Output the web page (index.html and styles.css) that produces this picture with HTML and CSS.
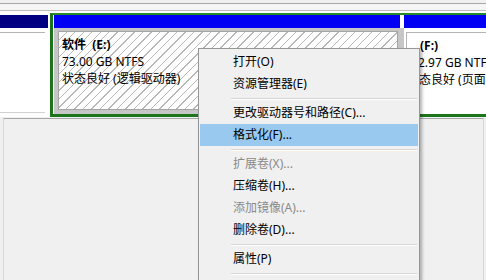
FILE: index.html
```html
<!DOCTYPE html>
<html lang="zh-CN">
<head>
<meta charset="utf-8">
<title>磁盘管理</title>
<link rel="stylesheet" href="styles.css">
</head>
<body>
<div class="screen">
  <div class="topbar"></div>
  <div class="disk">
    <div class="col-left">
      <div class="hdr navy"></div>
      <div class="lbody"></div>
    </div>
    <div class="ext">
      <div class="vol vol-e">
        <div class="hdr blue hdr-e"></div>
        <div class="ebody">
          <div class="hatch">
            <div class="b">软件&nbsp;&nbsp;(E:)</div>
            <div>73.00 GB NTFS</div>
            <div>状态良好 (逻辑驱动器)</div>
          </div>
        </div>
      </div>
      <div class="vol vol-f">
        <div class="hdr blue"></div>
        <div class="fbody">
          <div class="b f1">(F:)</div>
          <div class="f2">2.97 GB NTFS</div>
          <div class="f3">状态良好 (页面</div>
        </div>
      </div>
    </div>
  </div>
  <div class="lower"><div class="lower-inner"></div></div>

  <div class="menu">
    <div class="item">打开(O)</div>
    <div class="item">资源管理器(E)</div>
    <div class="sep"></div>
    <div class="item">更改驱动器号和路径(C)...</div>
    <div class="item sel">格式化(F)...</div>
    <div class="sep"></div>
    <div class="item dis">扩展卷(X)...</div>
    <div class="item">压缩卷(H)...</div>
    <div class="item dis">添加镜像(A)...</div>
    <div class="item">删除卷(D)...</div>
    <div class="sep"></div>
    <div class="item">属性(P)</div>
    <div class="sep"></div>
  </div>
</div>
</body>
</html>
```
FILE: styles.css
```css
* { box-sizing: border-box; margin: 0; padding: 0; }
html, body { width: 486px; height: 280px; overflow: hidden; background: #f0f0f0; }
body {
  font-family: "Noto Sans", "Noto Sans CJK SC", sans-serif;
  font-size: 12px;
  color: #000;
}
.screen {
  position: relative;
  width: 486px;
  height: 280px;
  display: flex;
  flex-direction: column;
  overflow: hidden;
}
.topbar {
  height: 13px;
  flex: none;
  background: linear-gradient(to bottom,
    #f0f0f0 0 3px, #a8a8a8 3px 4px, #f5f5f5 4px 10px,
    #bcbcbc 10px 11px, #ffffff 11px 13px);
}
.disk {
  height: 104px;
  flex: none;
  display: flex;
  background: #fff;
}
.col-left {
  width: 48px;
  flex: none;
  padding-top: 2px;
  display: flex;
  flex-direction: column;
}
.hdr { height: 13px; flex: none; }
.navy { background: #000080; }
.blue { background: #0000f4; }
.lbody {
  margin-top: 4px;
  height: 81px;
  margin-right: 3px;
  border-top: 1px solid #b4b4b4;
  border-bottom: 1px solid #d0d0d0;
}
.ext {
  flex: 1;
  min-width: 0;
  margin-left: 2px;
  border-top: 2px solid #2a8a2a;
  border-bottom: 3px solid #1c751c;
  border-left: 3px solid #1c751c;
  padding-left: 1px;
  display: flex;
  background: #fff;
}
.vol { display: flex; flex-direction: column; }
.vol-e { width: 350px; flex: none; }
.hdr-e { margin-right: 4px; }
.ebody {
  flex: 1;
  background: #c6c6c6;
  padding: 3px 6px 4px 4px;
}
.hatch {
  height: 100%;
  border: 1px solid #a4a4a4;
  background: repeating-linear-gradient(135deg, #ffffff 0 5px, #b8b8b8 5px 6px);
  padding: 4px 0 0 3px;
  line-height: 17px;
  white-space: nowrap;
}
.b { font-weight: bold; }
.vol-f { flex: 1; min-width: 0; }
.fbody {
  flex: 1;
  margin: 4px 0 0 2px;
  border-top: 1px solid #b4b4b4;
  border-left: 1px solid #b4b4b4;
  padding: 4px 0 0 0;
  line-height: 17px;
  white-space: nowrap;
  overflow: hidden;
  background: #fff;
}
.f1 { padding-left: 13px; }
.f2 { padding-left: 11px; }
.f3 { padding-left: 0; }
.lower {
  flex: 1;
  padding-top: 1px;
  background: #f0f0f0;
  display: flex;
}
.lower-inner {
  flex: 1;
  margin: 0 2px 0 3px;
  border-top: 1px solid #a8a8a8;
  border-left: 1px solid #d8d8d8;
  border-right: 1px solid #d8d8d8;
}
.menu {
  position: absolute;
  left: 198px;
  top: 48px;
  width: 222px;
  height: 260px;
  background: #f0f0f0;
  border: 1px solid #979797;
  box-shadow: 2px 2px 3px rgba(0, 0, 0, 0.3);
  padding: 2px 1px;
}
.item {
  height: 22px;
  line-height: 22px;
  padding-left: 33px;
  white-space: nowrap;
}
.item.sel { background: #99c9ef; }
.item.dis { color: #8a8a8a; }
.sep {
  height: 7px;
  margin: 0 1px 0 31px;
  background:
    linear-gradient(#d7d7d7, #d7d7d7) 0 3px / 100% 1px no-repeat,
    linear-gradient(#ffffff, #ffffff) 0 4px / 100% 1px no-repeat;
}
```
